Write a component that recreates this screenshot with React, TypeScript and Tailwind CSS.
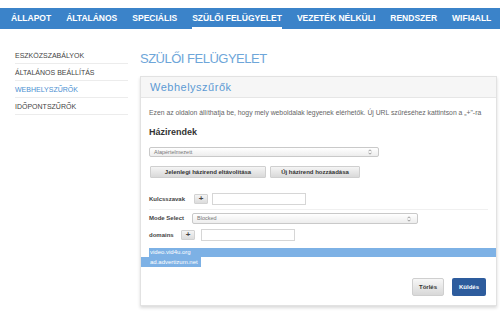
import React from "react";

const navItems = ["ÁLLAPOT", "ÁLTALÁNOS", "SPECIÁLIS", "SZÜLŐI FELÜGYELET", "VEZETÉK NÉLKÜLI", "RENDSZER", "WIFI4ALL"];
const sideItems = ["ESZKÖZSZABÁLYOK", "ÁLTALÁNOS BEÁLLÍTÁS", "WEBHELYSZŰRŐK", "IDŐPONTSZŰRŐK"];

function Arrows() {
    return (
        <svg width="4" height="6" viewBox="0 0 4 6" className="text-[#777]">
            <path d="M0.5 2.3 L2 0.8 L3.5 2.3" fill="none" stroke="currentColor" strokeWidth="0.7" />
            <path d="M0.5 3.7 L2 5.2 L3.5 3.7" fill="none" stroke="currentColor" strokeWidth="0.7" />
        </svg>
    );
}

function Select({ value, className }: { value: string; className: string }) {
    return (
        <div className={`flex items-center justify-between rounded-[2px] border border-[#c9c9c9] bg-gradient-to-b from-white to-[#ededed] pl-[4px] pr-[6px] text-[5.5px] text-[#777] ${className}`}>
            <span>{value}</span>
            <Arrows />
        </div>
    );
}

function PlusBtn() {
    return (
        <div className="flex h-[10px] w-[14px] items-center justify-center rounded-[1px] border border-[#d2d2d2] bg-gradient-to-b from-[#f4f4f4] to-[#dcdcdc] text-[8px] font-bold leading-none text-[#444]">
            +
        </div>
    );
}

export default function App() {
    return (
        <div className="h-[320px] w-[500px] overflow-hidden bg-white font-['Liberation_Sans',Arial,sans-serif]">
            {/* Menü */}
            <div className="mt-[8px] flex h-[21px] items-stretch gap-[15px] bg-[#3b83c9] pl-[11px] text-[8.5px] font-bold text-white">
                {navItems.map((item) => (
                    <div
                        key={item}
                        className={`flex items-center whitespace-nowrap ${item === "SZÜLŐI FELÜGYELET" ? "border-b-2 border-white pt-[2px]" : ""}`}
                    >
                        {item}
                    </div>
                ))}
            </div>

            <div className="flex">
                {/* Oldalsáv */}
                <div className="ml-[15px] w-[113px] pt-[18px]">
                    {sideItems.map((item) => (
                        <div
                            key={item}
                            className={`flex h-[17px] items-center border-b border-[#ececec] pt-[3px] text-[7px] ${item === "WEBHELYSZŰRŐK" ? "text-[#4a8fd1]" : "text-[#444]"}`}
                        >
                            {item}
                        </div>
                    ))}
                </div>

                {/* Tartalom */}
                <div className="ml-[12px] w-[357px] pt-[22px]">
                    <div className="h-[16px] text-[13px] leading-[16px] tracking-[-0.5px] text-[#6ea6d9]">
                        SZÜLŐI FELÜGYELET
                    </div>

                    <div className="mt-[9px] border border-[#e2e2e2] bg-white shadow-[0_2px_3px_rgba(0,0,0,0.15)]">
                        <div className="flex h-[21px] items-center border-b border-[#e6e6e6] bg-[#f6f6f6] px-[9px] text-[11px] tracking-[0.5px] text-[#5c9ad4]">
                            Webhelyszűrők
                        </div>

                        <div className="px-[8px] pb-[9px]">
                            <div className="mt-[11px] h-[8px] whitespace-nowrap text-[6.8px] leading-[8px] text-[#666]">
                                Ezen az oldalon állíthatja be, hogy mely weboldalak legyenek elérhetők. Új URL szűréséhez kattintson a „+"-ra
                            </div>

                            <div className="mt-[10px] h-[10px] text-[9px] font-bold leading-[10px] text-[#333]">Házirendek</div>

                            <Select value="Alapértelmezett" className="mt-[10px] h-[10px] w-[230px]" />

                            <div className="mt-[9px] flex gap-[4px] pl-[1px]">
                                <div className="flex h-[12px] w-[116px] items-center justify-center rounded-[1px] border border-[#cfcfcf] bg-gradient-to-b from-[#f5f5f5] to-[#d9d9d9] text-[6px] font-bold text-[#333]">
                                    Jelenlegi házirend eltávolítása
                                </div>
                                <div className="flex h-[12px] w-[90px] items-center justify-center rounded-[1px] border border-[#cfcfcf] bg-gradient-to-b from-[#f5f5f5] to-[#d9d9d9] text-[6px] font-bold text-[#333]">
                                    Új házirend hozzáadása
                                </div>
                            </div>

                            <div className="mt-[15px] flex items-center border-b border-[#f0f0f0] pb-[4px]">
                                <div className="w-[45px] text-[6px] font-bold text-[#444]">Kulcsszavak</div>
                                <PlusBtn />
                                <div className="ml-[4px] h-[12px] w-[94px] border border-[#d6d6d6] bg-white" />
                            </div>

                            <div className="mt-[3px] flex items-center">
                                <div className="w-[43px] text-[6px] font-bold text-[#444]">Mode Select</div>
                                <Select value="Blocked" className="h-[11px] w-[226px]" />
                            </div>

                            <div className="mt-[5px] flex items-center">
                                <div className="w-[32px] text-[6px] font-bold text-[#444]">domains</div>
                                <PlusBtn />
                                <div className="ml-[6px] h-[12px] w-[94px] border border-[#d6d6d6] bg-white" />
                            </div>

                            <div className="mt-[7px] text-[6px] text-white">
                                <div className="-mr-[8px] h-[9px] bg-[#7db1e5] pl-[1px] leading-[9px]">video.vid4u.org</div>
                                <div className="-ml-[8px] h-[10px] w-[60px] bg-[#7db1e5] pl-[9px] leading-[10px]">ad.advertizum.net</div>
                            </div>

                            <div className="mt-[11px] flex justify-end gap-[8px] pr-[2px]">
                                <div className="flex h-[18px] w-[32px] items-center justify-center rounded-[2px] border border-[#cfcfcf] bg-gradient-to-b from-[#f7f7f7] to-[#d8d8d8] text-[6px] font-bold text-[#333]">
                                    Törlés
                                </div>
                                <div className="flex h-[18px] w-[34px] items-center justify-center rounded-[2px] bg-[#2d5c9d] text-[6px] font-bold text-white">
                                    Küldés
                                </div>
                            </div>
                        </div>
                    </div>
                </div>
            </div>
        </div>
    );
}
